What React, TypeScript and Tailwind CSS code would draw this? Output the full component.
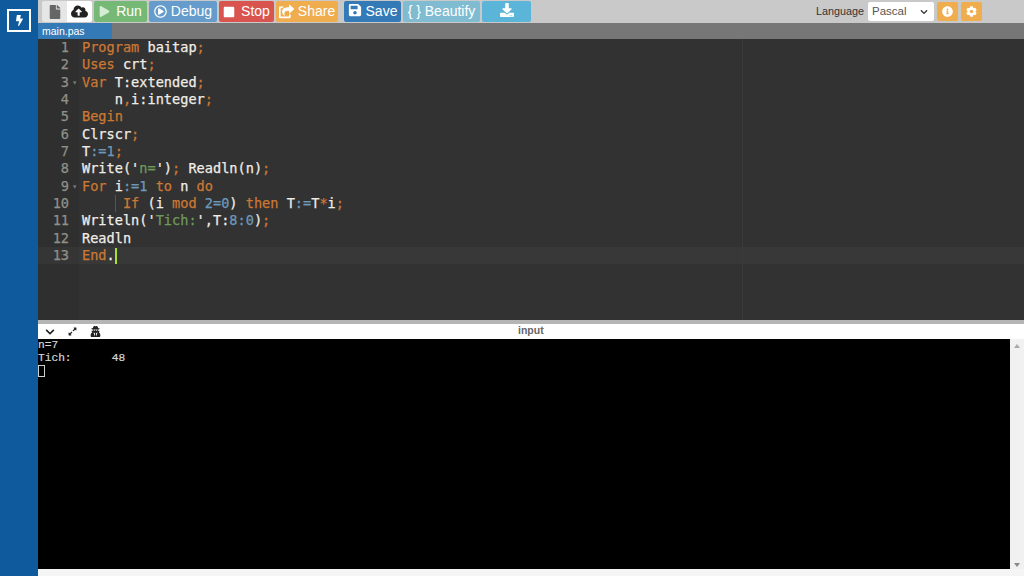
import { FaFile, FaCloudUploadAlt, FaPlay, FaRegPlayCircle, FaStop, FaShareSquare, FaSave, FaDownload, FaInfoCircle, FaCog, FaChevronDown, FaExpandAlt, FaUserSecret, FaBolt } from "react-icons/fa";

const k = "text-[#cc7833]";
const n = "text-[#6c99bb]";
const s = "text-[#6f9a5a]";
const t = "text-[#f0ece6]";

type Seg = [string, string];
const lines: Seg[][] = [
  [[k, "Program"], [t, " baitap"], [k, ";"]],
  [[k, "Uses"], [t, " crt"], [k, ";"]],
  [[k, "Var"], [t, " T:extended"], [k, ";"]],
  [[t, "    n"], [k, ","], [t, "i:integer"], [k, ";"]],
  [[k, "Begin"]],
  [[t, "Clrscr"], [k, ";"]],
  [[t, "T"], [n, ":=1"], [k, ";"]],
  [[t, "Write('"], [s, "n="], [t, "')"], [k, ";"], [t, " Readln(n)"], [k, ";"]],
  [[k, "For"], [t, " i"], [n, ":=1"], [k, " to"], [t, " n"], [k, " do"]],
  [[t, "     "], [k, "If"], [t, " (i "], [k, "mod"], [n, " 2=0"], [t, ") "], [k, "then"], [t, " T"], [n, ":="], [t, "T"], [k, "*"], [t, "i"], [k, ";"]],
  [[t, "Writeln('"], [s, "Tich:"], [t, "',T:"], [n, "8:0"], [t, ")"], [k, ";"]],
  [[t, "Readln"]],
  [[k, "End"], [t, "."]],
];

function Btn({ cls, children }: { cls: string; children: React.ReactNode }) {
  return <div className={"flex items-center justify-center gap-1 h-[21px] rounded-[2px] text-[14px] text-white shrink-0 " + cls}>{children}</div>;
}

export default function App() {
  return (
    <div className="flex w-[1024px] h-[576px] overflow-hidden bg-white font-['Liberation_Sans',sans-serif]">
      <div className="w-[38px] shrink-0 bg-[#0f5a9c] pt-[9px] pl-[7px]">
        <div className="w-[24px] h-[23px] border-2 border-white flex items-center justify-center text-white">
          <FaBolt size={11} />
        </div>
      </div>
      <div className="flex-1 min-w-0 flex flex-col">
        <div className="h-[23px] bg-[#c9c9c9] flex items-center pl-[4px] shrink-0">
          <div className="w-[25px] h-[21px] bg-[#e6e6e6] flex items-center justify-center text-[#666] rounded-l-[2px]"><FaFile size={14} /></div>
          <div className="w-[25px] h-[21px] bg-white flex items-center justify-center text-[#222] rounded-r-[2px]"><FaCloudUploadAlt size={17} /></div>
          <Btn cls="ml-[2px] w-[53px] bg-[#76b976] text-[#e2f2e2]"><FaPlay size={11} className="mr-[2px] text-[#d5ecd5]" />Run</Btn>
          <Btn cls="ml-[2px] w-[68px] bg-[#659ccb] text-[#e0ecf6]"><FaRegPlayCircle size={13} />Debug</Btn>
          <Btn cls="ml-[2px] w-[55px] bg-[#d9534f]"><FaStop size={12} className="mr-[2px]" />Stop</Btn>
          <Btn cls="ml-[2px] w-[62px] bg-[#f0ad4e]"><FaShareSquare size={15} />Share</Btn>
          <Btn cls="ml-[6px] w-[57px] bg-[#337ab7]"><FaSave size={14} className="-mt-[3px]" />Save</Btn>
          <Btn cls="ml-[2px] w-[77px] bg-[#7fbcd2] text-[#d6ebf2] text-[13.5px]">{"{ }"} Beautify</Btn>
          <Btn cls="ml-[2px] w-[49px] bg-[#5bb5d9]"><FaDownload size={14} className="-mt-[3px]" /></Btn>
          <div className="ml-auto flex items-center mr-[42px]">
            <span className="text-[10.8px] text-[#333] mr-[4px]">Language</span>
            <div className="w-[66px] h-[19px] bg-white rounded-[2px] flex items-center justify-between pl-[4px] pr-[6px] text-[11.5px] text-[#555]">
              Pascal
              <FaChevronDown size={8} className="text-[#333]" />
            </div>
            <div className="ml-[3px] w-[21px] h-[19px] bg-[#f0ad4e] rounded-[2px] flex items-center justify-center text-white"><FaInfoCircle size={11} /></div>
            <div className="ml-[3px] w-[21px] h-[19px] bg-[#f0ad4e] rounded-[2px] flex items-center justify-center text-white"><FaCog size={11} /></div>
          </div>
        </div>
        <div className="h-[16px] bg-[#777] shrink-0 flex">
          <div className="w-[74px] bg-[#337ab7] text-white text-[10.5px] leading-[16px] pl-[4px]">main.pas</div>
        </div>
        <div className="h-[281px] shrink-0 bg-[#323232] flex relative font-['DejaVu_Sans_Mono',monospace] text-[13.6px] [-webkit-text-stroke:0.25px]">
          <div className="w-[41px] shrink-0 bg-[#2f2f2f] text-[#8f908a]">
            {lines.map((_, i) => (
              <div key={i} className={"h-[17.33px] leading-[17.33px] relative text-right pr-[10px] " + (i === 12 ? "bg-[#353535]" : "")}>
                {i + 1}
                {(i === 2 || i === 8) && <span className="absolute right-[2px] top-0 text-[8px] text-[#777]">▾</span>}
              </div>
            ))}
          </div>
          <div className="flex-1 min-w-0 pl-[3px] relative">
            {lines.map((l, i) => (
              <div key={i} className={"h-[17.33px] leading-[17.33px] whitespace-pre relative -ml-[3px] pl-[3px] " + (i === 12 ? "bg-[#383838]" : "")}>
                {i === 9 && <span className="absolute left-[36px] top-0 bottom-0 w-px bg-[#555]" />}
                {l.map((seg, j) => <span key={j} className={seg[0]}>{seg[1]}</span>)}
                {i === 12 && <span className="inline-block align-middle w-[2px] h-[16px] bg-[#a6e22e]" />}
              </div>
            ))}
            <div className="absolute left-[663px] top-0 bottom-0 w-px bg-[#3a3a3a]" />
          </div>
        </div>
        <div className="h-[4px] bg-[#b5b5b5] shrink-0" />
        <div className="h-[15px] bg-white shrink-0 flex items-center relative text-[#222]">
          <FaChevronDown size={10} className="ml-[7px]" />
          <FaExpandAlt size={9} className="ml-[13px]" />
          <FaUserSecret size={11} className="ml-[13px]" />
          <span className="absolute left-[480px] top-0 text-[10.5px] leading-[12px] font-bold text-[#666]">input</span>
        </div>
        <div className="h-[230px] shrink-0 flex">
          <div className="flex-1 bg-black text-[#d8d8d8] font-['Liberation_Mono',monospace] text-[11.2px] leading-[12.5px] whitespace-pre [-webkit-text-stroke:0.2px]">
            <div>n=7</div>
            <div>Tich:      48</div>
            <div className="w-[7px] h-[12px] border border-[#d0d0d0] mt-px" />
          </div>
          <div className="w-[14px] bg-[#f1f1f1] relative">
            <div className="absolute top-[5px] left-[4px] w-0 h-0 border-x-[3px] border-x-transparent border-b-[4px] border-b-[#aaa]" />
            <div className="absolute bottom-[2px] left-[4px] w-0 h-0 border-x-[3px] border-x-transparent border-t-[4px] border-t-[#888]" />
          </div>
        </div>
        <div className="flex-1 bg-[#f5f5f5]" />
      </div>
    </div>
  );
}
